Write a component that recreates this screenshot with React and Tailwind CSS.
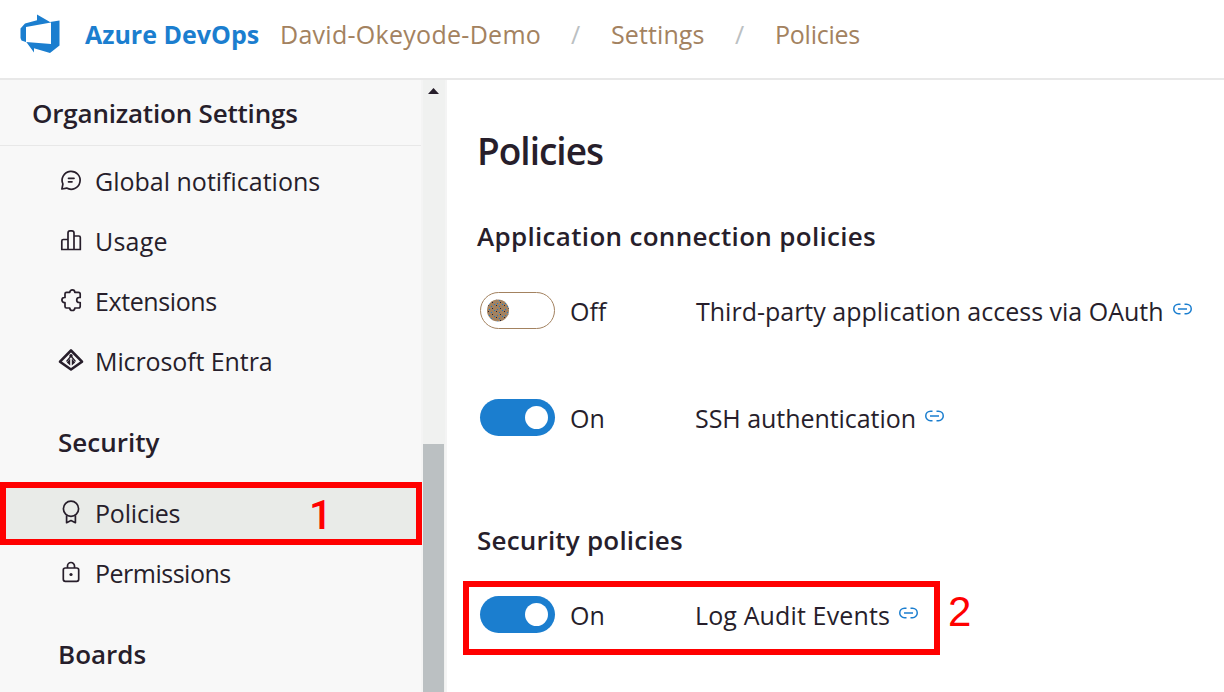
const icon = 'h-6 w-6 shrink-0 overflow-visible'

function Logo() {
  return (
    <svg className="h-[40px] w-[40px] shrink-0" viewBox="0 0 40 40" fill="#1b7ecf">
      <path
        fillRule="evenodd"
        d="M17 0.5L30 8L39.500 6.500V31.500L30 39L14 34.300V38.500L6.500 28.300L1.500 26.500L0.500 24V14.500L5 9.500L17 6.300ZM6 13V28L31 30V8.600Z"
      />
    </svg>
  )
}

function ChatIcon() {
  return (
    <svg className={icon} viewBox="0 0 24 24" fill="none" stroke="#271e2b" strokeWidth="1.700" strokeLinecap="round" strokeLinejoin="round">
      <path d="M3.900 16A9 9 0 1 1 7.600 20.100L2.900 21Z" />
      <path d="M9.500 10.300h5.500M9.500 13.800h3.500" />
    </svg>
  )
}

function UsageIcon() {
  return (
    <svg className={icon} viewBox="0 0 24 24" fill="none" stroke="#271e2b" strokeWidth="1.700">
      <path d="M2.800 21.500V13Q2.800 11.500 4.300 11.500H9M9 21.500V5Q9 2.800 11 2.800H12.800Q15 2.800 15 5V21.500M15 8H19.800Q21.300 8 21.300 9.500V21.500M2 21.500H22.100" />
    </svg>
  )
}

function PuzzleIcon() {
  return (
    <svg className={icon} viewBox="0 0 24 24" fill="none" stroke="#271e2b" strokeWidth="1.700" strokeLinejoin="round">
      <path d="M7.500 4.300H10.800A2.500 2.500 0 0 1 15.800 4.300H19.500Q21.200 4.300 21.200 6V9.500H20.200A2.500 2.500 0 0 0 20.200 14.500H21.200V18.300Q21.200 20 19.500 20H15.800A2.500 2.500 0 0 1 10.800 20H7.500Q6 20 6 18.500V14.700H5.500A2.500 2.500 0 0 1 5.500 9.500H6V5.800Q6 4.300 7.500 4.300Z" />
    </svg>
  )
}

function EntraIcon() {
  return (
    <svg className={icon} viewBox="0 0 24 24" fill="none" stroke="#271e2b">
      <path strokeWidth="2.600" strokeLinejoin="round" d="M12 2.500L23 13.700L12 21.500L1 13.700Z" />
      <path strokeWidth="1.200" d="M12 8L7.500 13.500M12 8L16.500 13.500" />
      <circle cx="12" cy="7.800" r="1.700" fill="#271e2b" stroke="none" />
      <path fill="#271e2b" stroke="none" d="M11.200 10.500v7L7.800 14.500ZM12.800 10.500v7L16.200 14.500Z" />
    </svg>
  )
}

function RibbonIcon() {
  return (
    <svg className={icon} viewBox="0 0 24 24" fill="none" stroke="#271e2b" strokeWidth="1.700">
      <circle cx="12" cy="8.800" r="7.600" />
      <path strokeLinejoin="round" d="M7.600 15.200V22.700L12 20.600L16.400 22.700V15.200" />
    </svg>
  )
}

function LockIcon() {
  return (
    <svg className={icon} viewBox="0 0 24 24" fill="none" stroke="#271e2b" strokeWidth="1.700">
      <rect x="4.300" y="8" width="15.400" height="13.300" rx="2" />
      <path d="M8.500 8V6A3.500 3.500 0 0 1 15.500 6V8" />
      <circle cx="12" cy="14.500" r="1.600" fill="#271e2b" stroke="none" />
    </svg>
  )
}

function LinkIcon() {
  return (
    <svg className="h-[12px] w-[19px] shrink-0" viewBox="0 0 19 12" fill="none" stroke="#1b7ecf" strokeWidth="1.500">
      <path d="M7.500 1.200H5.500A4.700 4.700 0 0 0 5.500 10.700H7.500M11.500 1.200H13.500A4.700 4.700 0 0 1 13.500 10.700H11.500M5 6H14" />
    </svg>
  )
}

function NavItem({ glyph, label, spacing, active }) {
  return (
    <div className={`flex h-[60px] items-center pl-[59px] ${active ? 'bg-[#e9ebe8]' : ''}`}>
      <div className="-mt-[2px] flex">{glyph}</div>
      <span className={`ml-3 text-[25px] leading-none ${spacing}`}>{label}</span>
    </div>
  )
}

function NavHeading({ children }) {
  return <h2 className="flex h-[92px] items-center pl-[58px] pt-[9px] text-[26px] leading-none font-semibold">{children}</h2>
}

function Toggle({ on }) {
  return on ? (
    <div className="flex h-[37px] w-[75px] shrink-0 items-center justify-end rounded-full bg-[#1b7ecf] pr-[7px]">
      <div className="h-[23px] w-[23px] rounded-full bg-white" />
    </div>
  ) : (
    <div className="flex h-[37px] w-[75px] shrink-0 items-center rounded-full border border-[#a38260] pl-[6px]">
      <svg className="h-[23px] w-[22px]" viewBox="0 0 22 23">
        <defs>
          <pattern id="knob" width="8" height="6" patternUnits="userSpaceOnUse">
            <rect width="8" height="6" fill="#a38260" />
            <path fill="#271e2b" d="M1 0h1v1H1zM5 3h1v1H5z" />
            <path fill="#1b7ecf" d="M4 1h1v1H4zM2 4h1v1H2zM7 5h1v1H7z" />
          </pattern>
        </defs>
        <circle cx="11" cy="11.500" r="11" fill="url(#knob)" />
      </svg>
    </div>
  )
}

function PolicyRow({ on, label, spacing }) {
  return (
    <div className="flex h-[37px] items-center pl-[33px]">
      <Toggle on={on} />
      <span className="mt-[2px] ml-[15px] w-[125px] text-[25px] leading-none">{on ? 'On' : 'Off'}</span>
      <span className={`mt-[2px] text-[25px] leading-none whitespace-nowrap ${spacing}`}>{label}</span>
      <span className="-mt-[4px] ml-[9px] flex">
        <LinkIcon />
      </span>
    </div>
  )
}

export default function App() {
  return (
    <div className="relative flex h-[692px] w-[1224px] flex-col overflow-hidden bg-white font-['Open_Sans','Noto_Sans',sans-serif] text-[#271e2b]">
      <header className="flex h-[80px] shrink-0 items-center border-b-2 border-[#e8e8e8] pb-[10px] pl-5 text-[25px] leading-none whitespace-nowrap text-[#a38260]">
        <Logo />
        <span className="ml-[25px] w-[195px] font-bold text-[#1b7ecf]">Azure DevOps</span>
        <span className="w-[291px] tracking-[0.28px]">David-Okeyode-Demo</span>
        <span className="w-[40px] text-[#bbc0c2]">/</span>
        <span className="w-[124px] tracking-[0.1px]">Settings</span>
        <span className="w-[40px] text-[#bbc0c2]">/</span>
        <span className="tracking-[-0.25px]">Policies</span>
      </header>

      <div className="flex min-h-0 flex-1">
        <nav className="w-[421px] shrink-0 bg-[#f8f8f8]">
          <h1 className="mb-[5px] flex h-[66px] items-center border-b border-[#e8e8e8] pl-8 text-[26px] leading-none font-semibold tracking-[-0.2px]">
            Organization Settings
          </h1>
          <NavItem glyph={<ChatIcon />} label="Global notifications" spacing="tracking-normal" />
          <NavItem glyph={<UsageIcon />} label="Usage" spacing="tracking-[0.2px]" />
          <NavItem glyph={<PuzzleIcon />} label="Extensions" spacing="tracking-[-0.4px]" />
          <NavItem glyph={<EntraIcon />} label="Microsoft Entra" spacing="tracking-[-0.1px]" />
          <NavHeading>Security</NavHeading>
          <NavItem glyph={<RibbonIcon />} label="Policies" spacing="tracking-[-0.2px]" active />
          <NavItem glyph={<LockIcon />} label="Permissions" spacing="tracking-[-0.5px]" />
          <NavHeading>Boards</NavHeading>
        </nav>

        <div className="flex w-[26px] shrink-0 flex-col justify-between border-x-2 border-[#f4f4f4] bg-[#f0f1f0]">
          <svg className="mt-[8px] ml-[5px] h-[6px] w-[11px]" viewBox="0 0 11 6">
            <path d="M5.500 0L11 6H0Z" fill="#271e2b" />
          </svg>
          <div className="h-[248px] w-[21px] bg-[#bbc0c2]" />
        </div>

        <main className="flex-1">
          <h1 className="mt-[50px] flex h-10 items-center pl-[30px] text-[37px] leading-none font-semibold tracking-[-1px]">Policies</h1>
          <h2 className="mt-[46px] flex h-10 items-center pl-[30px] text-[26px] leading-none font-semibold tracking-[0.31px]">
            Application connection policies
          </h2>
          <div className="mt-[36px]">
            <PolicyRow label="Third-party application access via OAuth" spacing="pl-px tracking-normal" />
          </div>
          <div className="mt-[70px]">
            <PolicyRow on label="SSH authentication" spacing="tracking-[-0.05px]" />
          </div>
          <h2 className="mt-[84px] flex h-10 items-center pl-[30px] text-[26px] leading-none font-semibold tracking-[0.2px]">Security policies</h2>
          <div className="mt-[36px]">
            <PolicyRow on label="Log Audit Events" spacing="tracking-[0.13px]" />
          </div>
        </main>
      </div>

      <div className="absolute top-[482px] left-0 h-[63px] w-[422px] border-6 border-[#ff0000]" />
      <span className="absolute top-[495px] left-[309px] font-['Roboto',sans-serif] text-[41px] leading-[41px] font-medium text-[#ff0000]">1</span>
      <div className="absolute top-[581px] left-[463px] h-[74px] w-[477px] border-6 border-[#ff0000]" />
      <span className="absolute top-[591px] left-[948px] font-['Liberation_Sans',sans-serif] text-[42px] leading-[41px] text-[#ff0000]">2</span>
    </div>
  )
}
